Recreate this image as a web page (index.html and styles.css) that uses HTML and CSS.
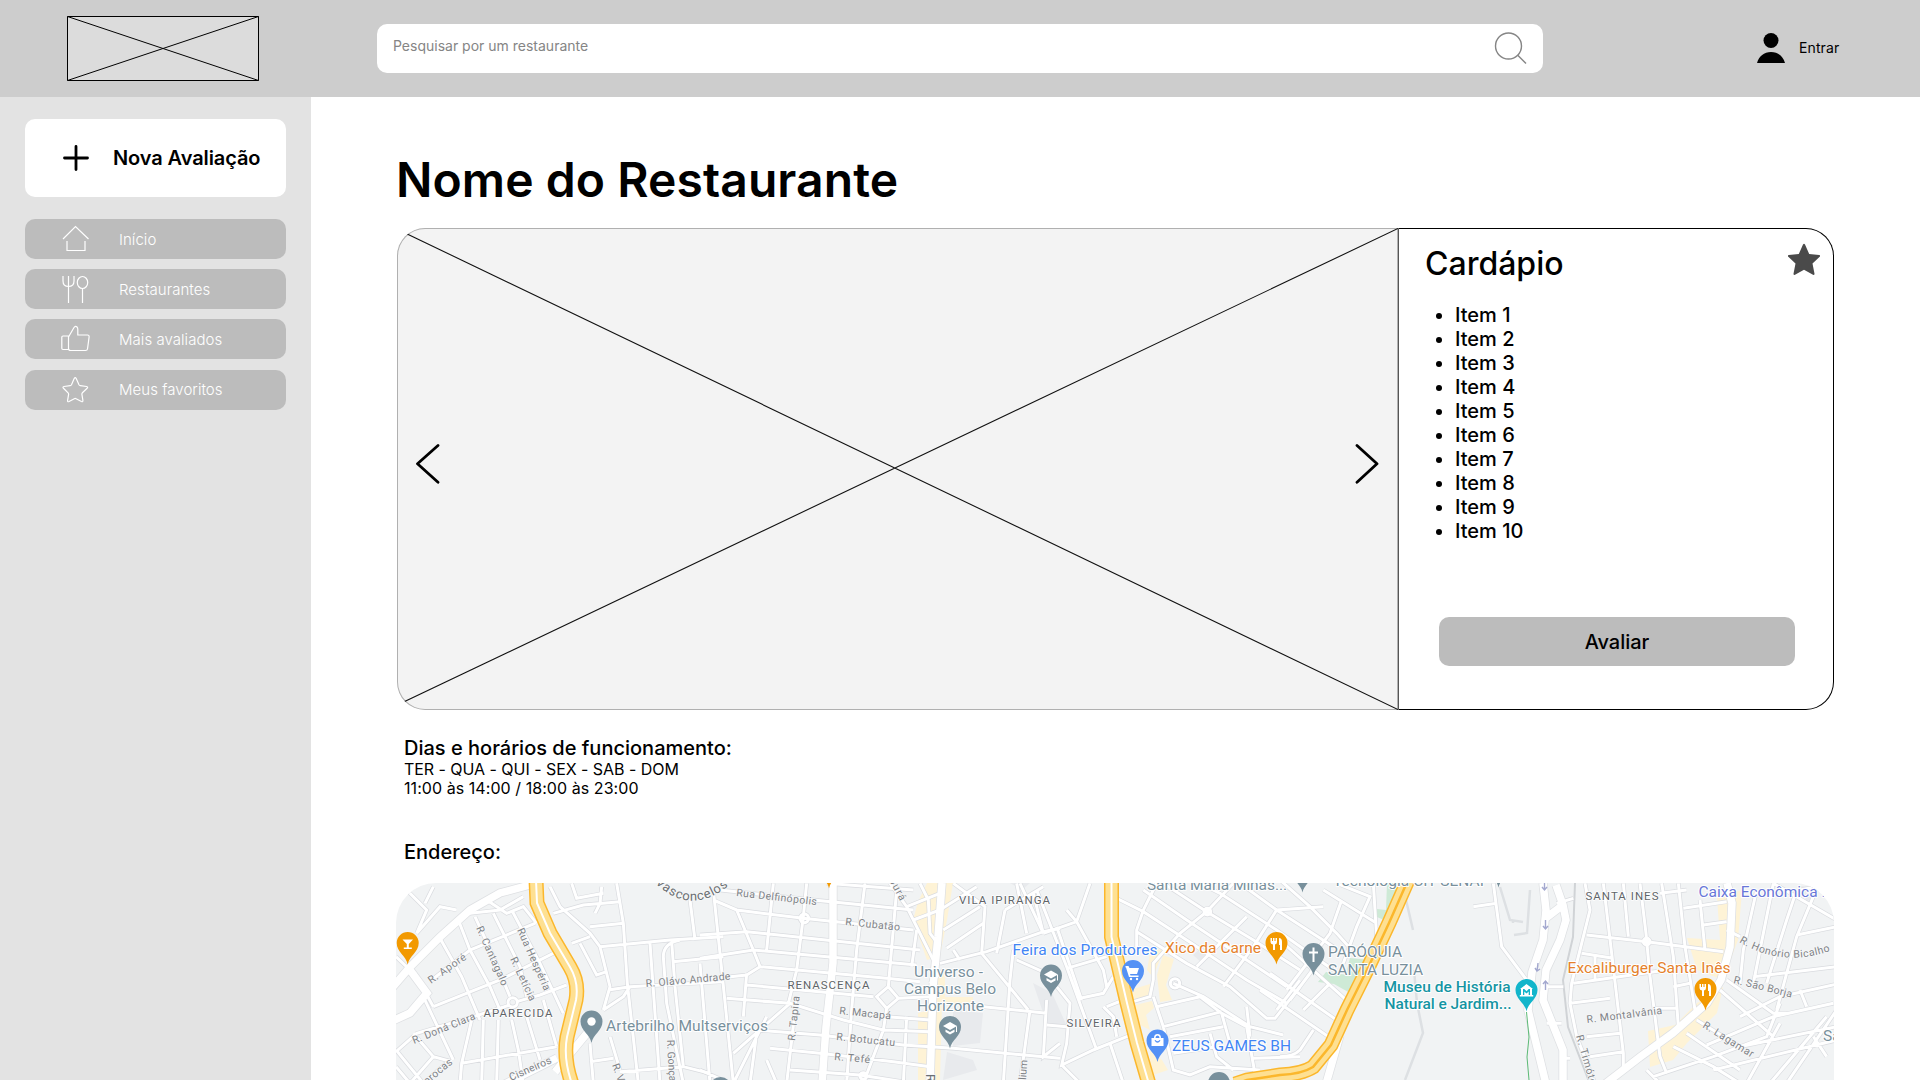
FILE: index.html
```html
<!DOCTYPE html>
<html lang="pt-BR">
<head>
<meta charset="utf-8">
<title>Nome do Restaurante</title>
<link rel="stylesheet" href="styles.css">
</head>
<body>
<header class="topbar">
  <div class="logo-area">
    <svg class="logo" width="192" height="65" viewBox="0 0 192 65"><path d="M.5.5h191v64H.5zM.5.5l191 64M.5 64.500l191-64"/></svg>
  </div>
  <div class="search">
    <span class="search-text">Pesquisar por um restaurante</span>
    <svg class="search-icon" width="34" height="34" viewBox="0 0 34 34"><circle cx="15.500" cy="15" r="13"/><path d="M24.500 24L33 32.500"/></svg>
  </div>
  <a class="login">
    <svg width="30" height="32" viewBox="0 0 30 32"><circle cx="15" cy="8.500" r="7.500"/><path d="M1 31C3 24 8 20 15 20s12 4 14 11z"/></svg>
    <span>Entrar</span>
  </a>
</header>
<div class="body">
  <nav class="sidebar">
    <a class="new-review">
      <svg width="26" height="26" viewBox="0 0 26 26"><path d="M13 1.500v23M1.500 13h23"/></svg>
      <span>Nova Avaliação</span>
    </a>
    <a class="nav-item">
      <svg width="30" height="30" viewBox="0 0 30 30"><path d="M2 15L14.500 2.500 27.500 15M6 17v9.500h18V17"/></svg>
      <span>Início</span>
    </a>
    <a class="nav-item">
      <svg width="30" height="30" viewBox="0 0 30 30"><path d="M2 2v5c0 3.500 2 5.500 5.500 5.500S13 10.500 13 7V2M7.500 2v27M21.500 14.500V29"/><ellipse cx="21.500" cy="8.500" rx="5.200" ry="6"/></svg>
      <span>Restaurantes</span>
    </a>
    <a class="nav-item">
      <svg width="30" height="30" viewBox="0 0 30 30"><path d="M2 12h5.500v13.500H2Q.8 25.500.8 24.300V13.200Q.8 12 2 12zM7.500 13L13 3.500Q14.500 1.500 16 3q.8.800.8 2.500V11h9.700q1.800 0 1.600 2l-1.600 12q-.3 1.500-2 1.500H9.500q-2 0-2-2z"/></svg>
      <span>Mais avaliados</span>
    </a>
    <a class="nav-item">
      <svg width="30" height="30" viewBox="0 0 30 30"><path d="M13.200 3.500q1-1.800 2 0l2.800 6.200q.4.800 1.300.9l6.300.9q1.800.4.500 1.800l-4.700 4.500q-.6.600-.5 1.500l1 6q.2 2-1.500 1.200l-5.300-2.800q-.9-.5-1.800 0l-5.200 2.800q-1.800.8-1.500-1.200l1-6q.1-.9-.5-1.500l-4.600-4.500q-1.300-1.400.5-1.800l6.200-.9q.9-.1 1.300-.9z"/></svg>
      <span>Meus favoritos</span>
    </a>
  </nav>
  <main class="content">
    <h1>Nome do Restaurante</h1>
    <section class="card">
      <div class="gallery">
        <svg width="1001" height="482" viewBox="397 228 1001 482">
          <path class="cross" d="M392 226.700L1398 709.500M392 707.500L1398 228.500"/>
          <path class="chevron" d="M438 445.500L417.500 463.800 438 482.200M1357 445.500L1377 463.800 1357 482.200"/>
        </svg>
      </div>
      <div class="menu">
        <div class="menu-head">
          <h2>Cardápio</h2>
          <svg width="34" height="34" viewBox="0 0 34 34"><path d="M16 1.500q1-1.500 2 0l4.200 9.500 10 1q1.500.5.500 1.800l-7.200 6.700 2 10.200q0 1.600-1.500 1.100L17 26.800l-9 5q-1.500.5-1.500-1.100l2-10.200-7.200-6.700q-1-1.300.5-1.800l10-1z"/></svg>
        </div>
        <ul>
          <li>Item 1</li><li>Item 2</li><li>Item 3</li><li>Item 4</li><li>Item 5</li>
          <li>Item 6</li><li>Item 7</li><li>Item 8</li><li>Item 9</li><li>Item 10</li>
        </ul>
        <a class="rate">Avaliar</a>
      </div>
    </section>
    <section class="hours">
      <h3>Dias e horários de funcionamento:</h3>
      <p class="days">TER - QUA - QUI - SEX - SAB - DOM</p>
      <p class="times">11:00 às 14:00 / 18:00 às 23:00</p>
    </section>
    <h3 class="address">Endereço:</h3>
    <div class="map">
      <svg width="1438" height="197" viewBox="396 883 1438 197">
        <defs>
          <g id="minor">
            <g transform="translate(390 870) scale(.33333)">
              <path d="M40 50L110 120 80 190M130 50L105 100M80 190L150 110 200 120M18 260L60 300M150 205L215 320 270 450M205 150L240 240 300 350 330 420M255 140L310 260 360 380M310 130L390 290 410 380M365 120L450 280 520 430M125 330L240 240 435 160M130 410L330 330 500 245M380 395L450 375 530 345M18 545L80 490 250 440 360 405M215 580L500 530M245 450L215 580 210 640M280 450L275 640M325 450L320 640M365 450L385 540 400 640M410 440L450 570M460 390L500 530M18 540L100 640M70 490L130 560 185 575M100 380L190 570M18 590L60 640M130 560L60 640M100 640L180 570M75 310L130 410M240 130L330 120 400 80M290 90L350 130 400 110 440 160"/>
              <path d="M480 50L510 110 600 190 630 230 650 310 660 350 640 420M490 130L580 105 690 95M545 40L560 85 640 70M635 50L630 100 615 130M600 170L700 160M680 40L700 160 712 340 745 640M545 220L600 200M570 220L620 315 650 305M630 230L840 210 1000 200M655 360L720 350 1000 335M640 420L700 380 720 350M780 220L810 640M870 210Q820 220 820 260L830 400 880 640M845 215L855 350 880 590M850 275L1000 260M900 90L915 210M600 520L610 640M660 500L690 600M600 575L670 565M690 605L880 590 960 610"/>
              <circle cx="368" cy="397" r="14"/>
            </g>
            <g transform="translate(700 870) scale(.33333)">
              <path d="M0 195L140 185 660 240M0 265L160 240 650 285M40 90L110 120 310 145 640 180M60 60L340 90 640 120M180 290L560 325 660 335M140 345L520 380M80 385L270 400 430 450 550 480 690 485M170 480L360 495 610 525 760 535 1080 565M210 535L360 550 580 575 690 590M270 600L480 615 640 640M100 550L270 400M110 120L160 240 180 290 140 315 0 330M220 40L200 240M140 310L130 440M320 40L310 140 290 300 265 400M290 380L260 640M495 40L470 240 455 420 440 640M590 60L565 350M650 180L635 290M620 440L610 640M565 350L530 380 560 415 595 385 565 350M40 60L60 250 100 640M0 280L30 640M200 570L230 640M560 415L550 480 490 640M595 385L690 380M560 440L690 450M100 640L140 560 200 440M0 600L90 640M380 40L640 60M170 490L150 640"/>
              <path d="M570 40L620 110 700 270M620 110L720 70M640 150L720 120 830 50M660 40L685 90 690 190 720 230M730 180L840 110M720 280L860 245 1030 185 1080 175M740 235L850 160M760 40L855 110 845 250 985 420M915 120L890 250M915 120L1030 50M950 40L980 190M1000 70L1030 190M940 240L930 330 910 640M850 410L1040 430M950 270L1040 310M1040 390L1030 560 1080 520M990 420L960 640M760 240L780 270M730 300L690 340"/>
              <circle cx="313" cy="145" r="13"/><circle cx="490" cy="618" r="10"/>
            </g>
            <g transform="translate(1000 870) scale(.33333)">
              <path d="M130 190L230 155 270 40M110 60L200 290 290 540M170 170L245 390M230 155L310 300 320 350M200 295L320 260M240 385L310 370 340 320M140 465L200 470M170 350L210 400 200 520 185 585 280 540 380 500 420 485M185 585L240 640M310 410L340 440 350 500M320 410L370 390M330 520L370 640M200 120L230 155M60 40L130 190"/>
              <path d="M350 85L430 125 560 210 740 330 860 400M410 185L560 280 690 350 800 445 825 445 900 350M430 60L560 150 740 270 860 350M490 40L620 125 760 210 900 300M600 40L660 70 830 180 1000 300M720 40L830 120 1000 230M410 250L410 180 430 120 470 40M460 330L460 280 540 190 620 125 700 40M590 290L740 140M670 350L760 230 830 120 970 110M520 340L610 380 750 470 850 495M400 395L450 380 460 330M470 410L600 380M460 380L490 470 520 600 570 615 630 590 780 600M665 425L490 470M510 500L670 470M520 550L650 530M600 380L665 430 740 470 770 640M740 410L750 500M630 490L650 560 700 600M900 560L760 565M665 430L690 520"/>
              <circle cx="525" cy="340" r="14"/><circle cx="622" cy="125" r="10"/>
            </g>
            <g transform="translate(1280 870) scale(.33333)">
              <path d="M0 30L90 110 170 190 215 240M130 60L290 160M170 40L270 80 230 170 190 280M185 90L150 190 20 360M280 40L290 200M0 210L210 400M-30 310L170 450M-60 360L160 510M100 480L60 540Q40 560 0 560M30 390L120 270M70 420L150 340M-10 420L60 330"/>
              <path d="M580 110L650 100M640 40L665 230 740 330M800 350L850 350M800 460L845 460M840 565L870 565M830 100L880 85"/>
            </g>
            <g transform="translate(1540 870) scale(.33333)">
              <path d="M135 40L150 120 95 340 90 400 110 500 165 640M190 40L215 250 250 550V600M250 40L265 200M300 40L318 190 330 320 360 560 380 610M365 40L400 260 415 470M415 40L435 230 465 420M140 195L320 215 550 245M125 250L220 265M100 340L380 300M90 400L210 385M140 500L240 490M150 560L250 545M430 115L560 95M480 90L495 240M490 165L560 155M400 350L450 340M165 260V330M340 415H410M360 70L440 60"/>
              <path d="M600 340L610 240 650 60M640 340L700 40M680 340L740 150 770 60M710 420L770 200 820 80M700 40L890 150M770 195L890 170M640 320L890 290M560 330L700 430 740 430M540 360L700 500M600 440L720 380 900 340M500 525L700 440 880 400M470 450L600 530 890 470M440 490L600 600M400 530L520 590 600 640M340 620L520 560 680 500 720 400M620 640L720 460M740 640L890 420M320 600L360 640M780 360L800 410M520 600L890 510M820 500L860 560M690 640L860 440M560 180L600 200M780 60L880 40"/>
              <circle cx="320" cy="215" r="10"/>
            </g>
          </g>
          <g id="major">
            <path d="M386 995L410 967 440 937 470 910 500 893 530 885M410 970L427 993 410 1013 390 1022M505 1084L557 1058M555 1072L588 1032M833 883V963L826 1027 822 1084M942 883L938 937 933 987 930 1084M1340 1035L1326 1084"/>
            <path d="M1543 883L1546 910 1543 940 1532 972 1528 1010 1546 1084M1556 885L1563 905 1566 920 1560 940 1546 970 1543 1000 1563 1050V1084M1546 918L1563 905M1727 883L1732 903 1730 947 1721 980 1707 1003 1673 1033 1640 1057 1605 1084"/>
          </g>
          <path id="highway-west" d="M536 880L537 903 550 933 570 967Q579 982 576 1000L567 1037Q563 1058 572 1084"/>
          <path id="highway-mid" d="M1111.500 880V937L1117 960 1127 1003 1137 1043 1149 1084"/>
          <path id="highway-east" d="M1408 880L1389 923 1367 970 1347 1010 1331 1045 1313 1067Q1302 1074 1280 1075L1247 1080 1235 1084"/>
          <path id="pin" d="M0 21.500C-1.500 13-11 9-11 0a11 11 0 0 1 22 0C11 9 1.500 13 0 21.500z"/>
          <path id="cap" d="M-7-2L0-6 7-2 0 2zM-4.500 1.500V4L0 6.500 4.500 4V1.500L0 4zM6-1.500H7V4H6z"/>
          <path id="food" d="M-6-6h1.500v3h1v-3h1.500v3h1v-3H.5v4Q.5 0-1.500.5V6h-2V.5Q-6 0-6-2zM2.500-6Q5.500-6 5.500-2V6h-2V1h-1z"/>
          <path id="vasconcelos" d="M655 883Q693 920 735 880"/>
          <path id="honorio" d="M1739 942Q1785 970 1838 948"/>
        </defs>
        <rect class="land" x="396" y="883" width="1438" height="197"/>
        <path class="campus" d="M953 1010L983 1013 980 1043 953 1046zM947 1052L973 1060 977 1070 943 1080zM1033 983L1052 993 1066 1024H1047zM1193 955L1200 949 1206 957 1202 963zM1010 883H1030L1022 890zM1807 902L1800 886H1825z"/>
        <g class="commerce">
          <path d="M918 902L927 883H953L947 920 940 956 927 960 913 920zM940 970H945V997H973V1003H942L940 1080H918V1013L930 1010zM1147 970L1150 953 1160 949 1163 952 1153 977zM1157 975L1163 955 1174 959 1166 985 1172 1000 1160 1002zM1130 990L1150 984V999L1133 1002zM1135 1005L1152 1001 1154 1008 1146 1015 1150 1030 1140 1025zM1150 1050L1162 1060 1168 1070 1150 1076z"/>
          <path d="M1717 897L1742 890 1738 940 1723 980 1697 970 1687 938 1720 940zM1648 1031L1675 1025 1697 1003 1723 987 1717 1013 1687 1043 1673 1060 1650 1067z"/>
        </g>
        <path class="park" d="M1387 883H1400L1384 920 1377 917V909L1386 910zM1318 982L1326 972 1354 976 1350 993 1334 984zM1350 958L1370 960 1357 990 1344 980z"/>
        <path class="rail" d="M1575 883L1573 937 1563 980 1568 1027 1590 1084"/>
        <path class="trail-gray" d="M1403 887L1413 930M1414 970L1417 1003 1423 1033 1405 1080M1500 887L1510 920 1523 922M1513 920V923M1530 890L1527 933 1514 935"/>
        <use href="#minor" class="minor-case"/>
        <use href="#major" class="major-case"/>
        <use href="#minor" class="minor-fill"/>
        <use href="#major" class="major-fill"/>
        <g class="hw-edge"><use href="#highway-west"/><use href="#highway-mid"/><use href="#highway-east"/></g>
        <g class="hw-fill"><use href="#highway-west"/><use href="#highway-mid"/><use href="#highway-east"/></g>
        <g class="hw-median-white"><use href="#highway-west"/><use href="#highway-mid"/></g>
        <use href="#highway-east" class="hw-median-orange"/>
        <path class="trail-green" d="M1526.500 1012L1529 1037 1527 1057 1529 1080"/>
        <path class="arrows" d="M1544.500 883v7m-2.500-3l2.500 3 2.500-3M1545.500 920v9m-2.500-3l2.500 3 2.500-3M1538 963l-1 8m-2-3l2 3 3-2M1545.500 990v-9m-2.500 3l2.500-3 2.500 3"/>

        <g class="street">
          <text transform="translate(431 984) rotate(-35)" textLength="44">R. Aporé</text>
          <text transform="translate(476 928) rotate(66)" textLength="64">R. Cantagalo</text>
          <text transform="translate(517 930) rotate(66)" textLength="67">Rua Hespéria</text>
          <text transform="translate(510 959) rotate(65)" textLength="47">R. Letícia</text>
          <text transform="translate(414 1044) rotate(-22)" textLength="67">R. Doná Clara</text>
          <text transform="translate(511 1081) rotate(-24)" textLength="45">Cisneiros</text>
          <text transform="translate(427 1085) rotate(-40)" textLength="34">procas</text>
          <text transform="translate(646 987) rotate(-5)" textLength="85">R. Olávo Andrade</text>
          <text transform="translate(736 896) rotate(6.500)" textLength="81">Rua Delfinópolis</text>
          <text transform="translate(845 925) rotate(6)" textLength="55">R. Cubatão</text>
          <text transform="translate(839 1014) rotate(6)" textLength="52">R. Macapá</text>
          <text transform="translate(836 1040) rotate(6)" textLength="59">R. Botucatu</text>
          <text transform="translate(834 1060) rotate(5)" textLength="36">R. Tefé</text>
          <text transform="translate(795 1041) rotate(-84)" textLength="45">R. Tapira</text>
          <text transform="translate(889 880) rotate(62)" textLength="24">purá</text>
          <text transform="translate(667 1040) rotate(87)" textLength="60">R. Gonçalves</text>
          <text transform="translate(612 1065) rotate(70)">R. V</text>
          <text transform="translate(1026 1080) rotate(-86)">lium</text>
          <text><textPath href="#honorio" textLength="95">R. Honório Bicalho</textPath></text>
          <text transform="translate(1733 983) rotate(14)" textLength="60">R. São Borja</text>
          <text transform="translate(1702 1027) rotate(32)" textLength="58">R. Lagamar</text>
          <text transform="translate(1587 1023) rotate(-7)" textLength="76">R. Montalvânia</text>
          <text transform="translate(1576 1036) rotate(74)" textLength="58">R. Timóteo</text>
          <text class="avenue"><textPath href="#vasconcelos" textLength="82">Vasconcelos</textPath></text>
          <text class="avenue" transform="translate(926 1074) rotate(90)">R</text>
        </g>
        <g class="district">
          <text x="483.500" y="1016.700" textLength="69">APARECIDA</text>
          <text x="787.500" y="988.700" textLength="82">RENASCENÇA</text>
          <text x="959" y="903.700" textLength="91">VILA IPIRANGA</text>
          <text x="1066.500" y="1027" textLength="54">SILVEIRA</text>
          <text x="1585.500" y="900.400" textLength="73">SANTA INES</text>
        </g>
        <g class="poi slate">
          <text x="606" y="1031" textLength="162">Artebrilho Multserviços</text>
          <text x="914" y="977" textLength="69">Universo -</text>
          <text x="904" y="994" textLength="92">Campus Belo</text>
          <text x="917" y="1010.800" textLength="67">Horizonte</text>
          <text x="1147" y="890" textLength="140">Santa Maria Minas...</text>
          <text x="1333" y="885.500" textLength="151">Tecnologia CIT SENAI</text>
          <text x="1328" y="957" textLength="74">PARÓQUIA</text>
          <text x="1328" y="975" textLength="95">SANTA LUZIA</text>
          <text x="1823" y="1041">Sa</text>
        </g>
        <g class="poi blue">
          <text x="1012.500" y="955" textLength="145">Feira dos Produtores</text>
          <text x="1172" y="1050.500" textLength="119">ZEUS GAMES BH</text>
        </g>
        <g class="poi orange">
          <text x="1165" y="952.700" textLength="96">Xico da Carne</text>
          <text x="1567.500" y="973" textLength="163">Excaliburger Santa Inês</text>
        </g>
        <g class="poi teal">
          <text x="1383.500" y="992" textLength="127">Museu de História</text>
          <text x="1384.500" y="1009" textLength="127">Natural e Jardim...</text>
        </g>
        <g class="poi indigo"><text x="1698.500" y="897" textLength="127">Caixa Econômica .</text></g>

        <g class="pin-slate">
          <use href="#pin" x="591.500" y="1021.500"/><use href="#pin" x="950" y="1027"/><use href="#pin" x="1051" y="975.500"/>
          <use href="#pin" x="1313.500" y="954"/><use href="#pin" x="720.500" y="1088"/><use href="#pin" x="1219" y="1083"/>
          <use href="#pin" x="1302.500" y="871"/><use href="#pin" x="1498.500" y="866"/>
        </g>
        <g class="pin-orange">
          <use href="#pin" x="407.700" y="943"/><use href="#pin" x="1276.500" y="943"/><use href="#pin" x="1705.500" y="989"/><use href="#pin" x="829" y="867"/>
        </g>
        <g class="pin-blue"><use href="#pin" x="1133" y="971"/><use href="#pin" x="1157.500" y="1040.500"/></g>
        <g class="pin-teal"><use href="#pin" x="1526.500" y="990"/></g>
        <g class="glyph">
          <circle cx="591.500" cy="1021.500" r="4.200"/>
          <use href="#cap" x="950" y="1028"/><use href="#cap" x="1051" y="976.500"/>
          <use href="#food" x="1276.500" y="944"/><use href="#food" x="1705.500" y="990"/>
          <path d="M402.500 939.500h10.500l-4.200 4.500v3.500h3v1.500h-8v-1.500h3v-3.500z"/>
          <path d="M1312.500 947.500h2v4h3.500v2h-3.500v8.500h-2v-8.500h-3.500v-2h3.500z"/>
          <path d="M1125.500 966h3l1 2h9.500l-2 6h-7l.5 1.500h8v1.500h-9.500l-3-9.500h-.5z"/><circle cx="1131" cy="979" r="1.200"/><circle cx="1137" cy="979" r="1.200"/>
          <path fill-rule="evenodd" d="M1151.500 1038h2.500q0-4 3.500-4t3.500 4h2.500v8h-12zM1155.500 1038h4q0-2.500-2-2.500t-2 2.500zM1154.500 1040.500q3 4.500 6 0l-1-.5q-2 2.500-4 0z"/>
          <path fill-rule="evenodd" d="M1520 989l6.500-5 6.500 5h-1v6h1.200v1.500h-13.400V995h1.200v-6zM1523 989v6h1.300v-3.500l2.200 2 2.200-2V995h1.300v-6h-1.300l-2.200 2.300-2.200-2.300z"/>
        </g>
      </svg>
    </div>
  </main>
</div>
</body>
</html>
```
FILE: styles.css
```css
* { box-sizing: border-box; }
body {
  margin: 0;
  width: 1920px;
  height: 1080px;
  overflow: hidden;
  background: #fff;
  color: #000;
  font-family: Inter, "Liberation Sans", sans-serif;
}
h1, h2, h3, p, ul { margin: 0; padding: 0; }
svg { display: block; flex: none; }

.topbar {
  display: flex;
  height: 97px;
  background: #cdcdcd;
}
.logo-area { width: 377px; padding: 16px 0 0 67px; }
.logo path { fill: #dcdcdc; stroke: #000; stroke-width: 1; }
.search {
  display: flex;
  justify-content: space-between;
  width: 1166px;
  height: 49px;
  margin-top: 24px;
  padding: 7px 16px 0 16px;
  border-radius: 10px;
  background: #fff;
}
.search-text { padding-top: 6px; font-size: 14px; line-height: 17px; color: #858585; }
.search-icon { fill: none; stroke: #858585; stroke-width: 1.4; }
.login {
  display: flex;
  gap: 13px;
  margin-left: 213px;
  padding-top: 32px;
  font-size: 14px;
}
.login span { padding-top: 7px; line-height: 17px; letter-spacing: .1px; }

.body { display: flex; height: 983px; }
.sidebar {
  display: flex;
  flex-direction: column;
  gap: 10.150px;
  width: 311px;
  padding: 22px 25px;
  background: #e3e3e3;
}
.new-review {
  display: flex;
  align-items: center;
  gap: 24px;
  height: 78px;
  margin-bottom: 12px;
  padding-left: 38px;
  border-radius: 10px;
  background: #fff;
  font-size: 20px;
  font-weight: 600;
  letter-spacing: -.1px;
  white-space: nowrap;
}
.new-review svg { fill: none; stroke: #000; stroke-width: 2.800; stroke-linecap: round; }
.nav-item {
  display: flex;
  align-items: center;
  gap: 28px;
  height: 40px;
  padding-left: 36px;
  border-radius: 10px;
  background: #bcbcbc;
  color: #fff;
  font-size: 15px;
  font-weight: 300;
  letter-spacing: .05px;
}
.nav-item svg { fill: none; stroke: #fff; stroke-width: 1.200; }

.content { display: flex; flex-direction: column; width: 1609px; padding: 54px 86px 0 85px; }
h1 { height: 77px; font-size: 48px; font-weight: 600; line-height: 58px; letter-spacing: .08px; }
.card { display: flex; width: 1437px; height: 482px; margin-left: 1px; }
.gallery {
  width: 1001px;
  overflow: hidden;
  border-radius: 28px 0 0 28px;
  background: #f3f3f3;
  box-shadow: inset 0 0 0 1px #b0b0b0;
}
.cross { fill: none; stroke: #111; stroke-width: 1.100; }
.chevron { fill: none; stroke: #000; stroke-width: 2.800; stroke-linecap: round; stroke-linejoin: round; }
.menu {
  display: flex;
  flex-direction: column;
  width: 436px;
  padding: 15px 0 0 26px;
  border: 1px solid #000;
  border-left-color: #555;
  border-radius: 0 28px 28px 0;
}
.menu-head { display: flex; justify-content: space-between; height: 59px; padding-right: 12px; }
.menu-head svg { margin-top: -1px; fill: #4a4a4a; }
h2 { font-size: 32px; font-weight: 500; line-height: 39px; }
ul { padding-left: 30px; font-size: 20px; font-weight: 500; line-height: 24px; }
.rate {
  display: flex;
  align-items: center;
  justify-content: center;
  width: 356px;
  height: 49px;
  margin: 74px 0 0 14px;
  border-radius: 10px;
  background: #bcbcbc;
  font-size: 20px;
  font-weight: 500;
}
.hours { padding: 26px 0 0 8px; }
h3 { font-size: 20px; font-weight: 500; line-height: 24px; }
.hours p { font-size: 16px; line-height: 19px; }
.hours .days { letter-spacing: -.04px; }
.hours .times { letter-spacing: .06px; }
.address { margin: 42px 0 19px 8px; }
.map { width: 1438px; height: 197px; overflow: hidden; border-radius: 40px 40px 0 0; }

.land { fill: #f1f3f4; }
.campus { fill: #e8eaed; }
.commerce { fill: #fef3d6; }
.park { fill: #ceead6; }
.rail { fill: none; stroke: #d0d3d6; stroke-width: 2; }
.trail-gray { fill: none; stroke: #dde0e3; stroke-width: 2.500; }
.trail-green { fill: none; stroke: #5bb974; stroke-width: 1; }
.arrows { fill: none; stroke: #a3a8cf; stroke-width: 1.400; }
.minor-case { fill: none; stroke: #d9dbdf; stroke-width: 13; }
.minor-fill { fill: none; stroke: #fff; stroke-width: 9; }
.major-case { fill: none; stroke: #dee0e3; stroke-width: 9; }
.major-fill { fill: none; stroke: #fff; stroke-width: 7.500; }
.hw-edge { fill: none; stroke: #fbb72c; stroke-width: 15; }
.hw-fill { fill: none; stroke: #fee092; stroke-width: 12; }
.hw-median-white { fill: none; stroke: #fff; stroke-width: 2; }
.hw-median-orange { fill: none; stroke: #fbb72c; stroke-width: 2.500; }

.map text { font-family: Roboto, sans-serif; paint-order: stroke; stroke-linejoin: round; }
.street text { font-size: 10.500px; fill: #7f8387; stroke: #f7f8f9; stroke-width: 1.500px; }
.street .avenue { font-size: 13px; fill: #6b6f73; }
.district text { font-size: 11.500px; fill: #606468; stroke: #fff; stroke-width: 1.500px; }
.poi text { font-size: 15.500px; stroke: #fff; stroke-width: 2px; }
.slate text { fill: #78909c; }
.blue text { fill: #4285f4; }
.orange text { fill: #e5812b; }
.teal text { fill: #1595a3; font-weight: 500; }
.indigo text { fill: #6877d8; }
.pin-slate { fill: #78909c; }
.pin-orange { fill: #f29900; }
.pin-blue { fill: #5491f5; }
.pin-teal { fill: #12b5cb; }
.glyph { fill: #fff; }
```
